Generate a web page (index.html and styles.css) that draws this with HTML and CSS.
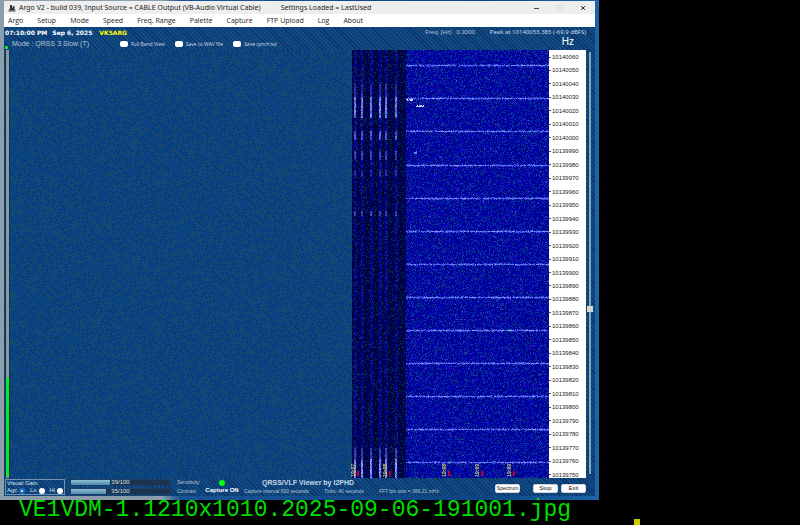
FILE: index.html
```html
<!DOCTYPE html>
<html lang="en">
<head>
    <meta charset="UTF-8">
    <meta name="viewport" content="width=device-width, initial-scale=1.0">
    <title>VE1VDM-1.1210x1010.2025-09-06-191001.jpg</title>
    <link rel="stylesheet" href="styles.css">
</head>
<body>

    <div class="desktop">
        <main class="window">

            <!-- Title bar -->
            <header class="title-bar">
                <svg class="app-icon" viewBox="0 0 16 16" aria-hidden="true">
                    <path d="M4 2h4v5h2V4h3v6l2 3H1l3-4z" fill="#333"/>
                    <path d="M1 14h14" stroke="#555" stroke-width="2"/>
                </svg>
                <h1>Argo V2 - build 039, Input Source = CABLE Output (VB-Audio Virtual Cable)</h1>
                <span class="settings">Settings Loaded = LastUsed</span>
                <div class="window-buttons">
                    <button aria-label="Minimize"><svg viewBox="0 0 6 6"><path d="M0 3.5h5" stroke="#446"/></svg></button>
                    <button aria-label="Maximize"><svg viewBox="0 0 6 6"><rect x="0.5" y="0.5" width="5" height="5" rx="1" fill="none" stroke="#c4dede"/></svg></button>
                    <button aria-label="Close"><svg viewBox="0 0 6 6"><path d="M1 1l4 4M5 1l-4 4" stroke="#333"/></svg></button>
                </div>
            </header>

            <nav class="menu-bar">
                <a href="#">Argo</a>
                <a href="#">Setup</a>
                <a href="#">Mode</a>
                <a href="#">Speed</a>
                <a href="#">Freq. Range</a>
                <a href="#">Palette</a>
                <a href="#">Capture</a>
                <a href="#">FTP Upload</a>
                <a href="#">Log</a>
                <a href="#">About</a>
            </nav>

            <div class="client">
                <div class="status-row">
                    <b>07:10:00 PM</b>
                    <b>Sep 6, 2025</b>
                    <b class="callsign">VK5ARG</b>
                    <span class="freq">Freq. [Hz]&nbsp;&nbsp; 0.3000</span>
                    <span class="peak">Peak at 10140053.385 (-69.9 dBFS)</span>
                </div>

                <div class="mode-row">
                    <i class="meter-led"></i>
                    <span class="mode">Mode : QRSS 3 Slow (T)</span>
                    <label><input type="checkbox"> Full Band View</label>
                    <label><input type="checkbox"> Save to WAV file</label>
                    <label><input type="checkbox"> Save synch'ed</label>
                    <span class="unit">Hz</span>
                </div>

                <!-- Waterfall with level meter and frequency scale -->
                <section class="viewer">
                    <div class="meter"><div class="meter-level"></div></div>
                    <div class="waterfall">
                        <canvas id="waterfall"></canvas>
                        <span class="tick tick-1">19:07</span>
                        <span class="tick tick-2">19:08</span>
                        <span class="tick tick-3">19:08</span>
                        <span class="tick tick-4">19:09</span>
                        <span class="tick tick-5">19:09</span>
                    </div>
                    <ol class="scale" id="scale"></ol>
                    <input class="tuning" type="range" min="0" max="100" value="39" aria-label="Frequency">
                </section>

                <footer class="controls">
                    <fieldset class="gain">
                        <legend>Visual Gain</legend>
                        <div class="gain-options">
                            <label>Agc <input type="radio" name="gain" checked></label>
                            <label>Lo <input type="radio" name="gain"></label>
                            <label>Hi <input type="radio" name="gain"></label>
                        </div>
                    </fieldset>

                    <div class="levels">
                        <div class="level">
                            <progress id="sensitivity" value="39" max="100"></progress>
                            <span>39/100</span>
                        </div>
                        <label for="sensitivity">Sensitivity</label>
                        <div class="level">
                            <progress id="contrast" value="35" max="100"></progress>
                            <span>35/100</span>
                        </div>
                        <label for="contrast">Contrast</label>
                    </div>

                    <div class="capture">
                        <i class="led"></i>
                        <b>Capture ON</b>
                    </div>

                    <div class="info">
                        <strong>QRSS/VLF Viewer by I2PHD</strong>
                        <div class="info-row">
                            <span>Capture interval 600 seconds</span>
                            <span>Ticks: 40 seconds</span>
                            <span>FFT bin size = 366.21 mHz</span>
                        </div>
                    </div>

                    <div class="actions">
                        <button class="spectrum">Spectrum</button>
                        <button>Stop</button>
                        <button>Exit</button>
                    </div>
                </footer>
            </div>
        </main>
    </div>

    <div class="caption">
        <p>VE1VDM-1.1210x1010.2025-09-06-191001.jpg</p>
        <i class="marker"></i>
    </div>

    <script src="waterfall.js"></script>
</body>
</html>
```

FILE: styles.css
```css
* {
    box-sizing: border-box;
}

body {
    margin: 0;
    height: 100vh;
    display: flex;
    flex-direction: column;
    background: #000;
    font-family: "Liberation Sans", Arial, sans-serif;
    font-size: 6px;
    overflow: hidden;
}

button,
input {
    margin: 0;
    padding: 0;
    font: inherit;
}

/* Desktop behind the window */
.desktop {
    flex: 1;
    width: calc(75% - 1px);
    min-height: 0;
    padding: 1px 4px 4px;
    display: flex;
    background: linear-gradient(90deg, #8c9eac 0 27%, #1a5494 30%, #0c4484 80%, #1c64a8);
}

.window {
    flex: 1;
    display: flex;
    flex-direction: column;
    min-width: 0;
}

/* Title bar */
.title-bar {
    display: flex;
    align-items: center;
    height: 13px;
    padding: 0 9px 0 4px;
    background: #eee;
    color: #222;
    font-family: "Noto Sans", "Open Sans", sans-serif;
    font-size: 7px;
    white-space: nowrap;
}

.title-bar h1 {
    margin: 0 20px 0 3px;
    font-size: 7px;
    font-weight: 400;
}

.app-icon {
    width: 8px;
    height: 8px;
}

.window-buttons {
    margin-left: auto;
    display: flex;
    gap: 17px;
}

.window-buttons button {
    display: flex;
    border: 0;
    background: none;
}

.window-buttons svg {
    width: 6px;
    height: 6px;
}

/* Menu */
.menu-bar {
    display: flex;
    align-items: center;
    gap: 14px;
    height: 13px;
    padding-left: 4px;
    background: #fff;
    font-family: "Open Sans", sans-serif;
    font-size: 7px;
    white-space: nowrap;
}

.menu-bar a {
    color: #222;
    text-decoration: none;
}

/* Client area */
.client {
    flex: 1;
    min-height: 0;
    display: flex;
    flex-direction: column;
    padding-left: 1px;
    background:
        repeating-linear-gradient(45deg, rgba(16, 24, 90, 0.5) 0 1px, transparent 1px 3px),
        #0e4c82;
    color: #b8c4d0;
    white-space: nowrap;
}

.status-row {
    display: flex;
    align-items: center;
    gap: 5px;
    height: 10px;
    padding-right: 9px;
}

.status-row b {
    color: #fff;
    font-family: "DejaVu Sans", sans-serif;
}

.status-row .callsign {
    margin-left: 2px;
    color: #ff0;
}

.status-row .freq {
    margin-left: auto;
    margin-right: 10px;
}

.peak {
    color: #d0d8e0;
    font-family: "Noto Sans", "Open Sans", sans-serif;
}

.mode-row {
    display: flex;
    align-items: center;
    height: 13px;
}

.meter-led {
    align-self: flex-end;
    width: 3px;
    height: 3px;
    margin: 0 4px 1px 0;
    background: #0e2;
}

.mode {
    width: 108px;
    font-size: 7px;
}

.mode-row label {
    display: flex;
    align-items: center;
    gap: 3px;
    margin-right: 10px;
    color: #d4dce4;
    font-family: "Open Sans", sans-serif;
    font-size: 5px;
}

.mode-row input {
    appearance: none;
    width: 8px;
    height: 6px;
    border-radius: 2px;
    background: #fff;
}

.unit {
    margin-left: auto;
    padding-right: 21px;
    color: #fff;
    font-size: 10px;
    line-height: 10px;
    align-self: flex-start;
}

/* Waterfall */
.viewer {
    flex: 1;
    min-height: 0;
    display: flex;
}

.meter {
    width: 5px;
    display: flex;
    flex-direction: column;
    justify-content: flex-end;
    padding-bottom: 2px;
    border: solid #12324c;
    border-width: 0 1px;
    background: #8a9aa4;
}

.meter-level {
    height: 23%;
    background: #0e2;
}

.waterfall {
    position: relative;
    flex: 1;
    min-width: 0;
}

.waterfall canvas {
    display: block;
    width: 100%;
    height: 100%;
}

.tick {
    position: absolute;
    bottom: 1px;
    writing-mode: vertical-rl;
    transform: rotate(180deg);
    color: #e0d860;
    font-size: 5px;
    font-weight: 700;
    line-height: 6px;
}

.tick-1 { left: 63%; }
.tick-2 { left: 69%; }
.tick-3 { left: 80%; }
.tick-4 { left: 86%; }
.tick-5 { left: 92%; }

.scale {
    display: flex;
    flex-direction: column;
    justify-content: space-between;
    width: 37px;
    margin: 0;
    padding: 4px 0 0;
    background: #fff;
    color: #222;
    list-style: none;
    line-height: 6px;
}

.scale li {
    display: flex;
    align-items: center;
    gap: 1px;
}

.scale li::before {
    content: "";
    width: 2px;
    height: 1px;
    background: #555;
}

.tuning {
    appearance: none;
    writing-mode: vertical-lr;
    direction: rtl;
    width: 7px;
    margin: 2px 2px 4px 0;
    background: linear-gradient(#7fa8b8, #7fa8b8) center / 2px 100% no-repeat;
}

.tuning::-webkit-slider-thumb {
    appearance: none;
    width: 6px;
    height: 6px;
    background: #d8d8d0;
}

/* Bottom controls */
.controls {
    display: flex;
    height: 18px;
}

.gain {
    width: 60px;
    min-width: 0;
    height: 16px;
    margin: 1px 5px 0 0;
    padding: 0 1px;
    border: 1px solid #6f93b0;
    color: #dde4ea;
    line-height: 7px;
}

.gain legend {
    float: left;
    width: 100%;
    padding: 0;
}

.gain-options {
    clear: both;
    display: flex;
    justify-content: space-between;
}

.gain label {
    display: flex;
    align-items: center;
    gap: 2px;
}

.gain input {
    appearance: none;
    width: 6px;
    height: 6px;
    border-radius: 50%;
    background: #fff;
}

.gain input:checked {
    border: 2px solid #1f6fc0;
}

.levels {
    display: grid;
    grid-template-columns: 101px 24px;
    grid-auto-rows: 7px;
    align-content: start;
    gap: 2px 6px;
    padding-top: 1px;
    font-size: 5px;
    line-height: 7px;
}

.level {
    display: grid;
}

.level > * {
    grid-area: 1 / 1;
}

.level span {
    color: #dde4ea;
    font-size: 6px;
    text-align: center;
}

progress {
    appearance: none;
    width: 100%;
    height: 7px;
    border: 1px solid #1c3f66;
}

progress::-webkit-progress-bar {
    background: #1c3350;
}

progress::-webkit-progress-value {
    background: linear-gradient(#8fc0d4, #4f88ac);
}

.capture {
    display: flex;
    flex-direction: column;
    align-items: center;
    gap: 1px;
    width: 34px;
    margin-left: 4px;
    padding-top: 2px;
    color: #fff;
    line-height: 7px;
}

.led {
    width: 6px;
    height: 6px;
    border-radius: 50%;
    background: #0f1;
}

.info {
    margin-left: 5px;
}

.info strong {
    display: block;
    padding-left: 18px;
    color: #c4d8e8;
    font-size: 7px;
    line-height: 10px;
}

.info-row {
    display: flex;
    gap: 15px;
    font-size: 5px;
    line-height: 7px;
}

.actions {
    display: flex;
    align-items: center;
    gap: 3px;
    margin-left: auto;
    padding: 5px 9px 2px 0;
}

.actions button {
    width: 25px;
    height: 9px;
    border: 1px solid #cdd6dd;
    border-radius: 2px;
    background: #fff;
    color: #111;
    line-height: 7px;
}

.actions .spectrum {
    margin-right: 10px;
    font-size: 5px;
}

/* File name under the capture */
.caption {
    display: flex;
    align-items: flex-end;
    justify-content: space-between;
    height: 25px;
    padding: 0 20% 0 19px;
}

.caption p {
    align-self: flex-start;
    margin: 0;
    color: #0d0;
    font-family: "Liberation Mono", "Courier New", monospace;
    font-size: 23px;
    line-height: 20px;
}

.marker {
    width: 6px;
    height: 6px;
    background: #cc0;
}
```

FILE: waterfall.js
```js
// Frequency scale
const scale = document.getElementById('scale');
for (let hz = 10140060; hz >= 10139750; hz -= 10) {
    const item = document.createElement('li');
    item.textContent = hz;
    scale.appendChild(item);
}

// Waterfall
const canvas = document.getElementById('waterfall');
const ctx = canvas.getContext('2d');

let seed = 7;
function random() {
    seed = (seed * 16807) % 2147483647;
    return seed / 2147483647;
}

function pick(colors) {
    return colors[Math.floor(random() * colors.length)];
}

function speckle(x, y, w, h, colors, density) {
    for (let py = y; py < y + h; py++) {
        for (let px = x; px < x + w; px++) {
            if (random() < density) {
                ctx.fillStyle = pick(colors);
                ctx.fillRect(px, py, 1, 1);
            }
        }
    }
}

// Ordered grain of the area that has no data yet
function grain(w, h) {
    ctx.fillStyle = '#004488';
    ctx.fillRect(0, 0, w, h);
    for (let y = 0; y < h; y++) {
        for (let x = 0; x < w; x++) {
            if ((x + y) % 2 === 0) {
                ctx.fillStyle = '#104a78';
                ctx.fillRect(x, y, 1, 1);
            } else if ((x + 3 * y) % 8 === 1) {
                ctx.fillStyle = random() < 0.6 ? '#101880' : '#50403c';
                ctx.fillRect(x, y, 1, 1);
            }
        }
    }
}

function draw() {
    const w = canvas.width = canvas.clientWidth;
    const h = canvas.height = canvas.clientHeight;
    const darkX = Math.round(w * 0.635);
    const blueX = Math.round(w * 0.735);
    const pulses = [0.03, 0.17, 0.34, 0.5, 0.61, 0.79];
    const bursts = [[0.08, 0.04, 0.3], [0.11, 0.05, 0.95], [0.19, 0.02, 0.7], [0.235, 0.02, 0.45],
        [0.28, 0.015, 0.3], [0.377, 0.012, 0.45], [0.93, 0.03, 0.45], [0.955, 0.045, 1]];

    grain(darkX, h);

    // Pulses
    ctx.fillStyle = '#000048';
    ctx.fillRect(darkX, 0, blueX - darkX, h);
    speckle(darkX, 0, blueX - darkX, h, ['#00006c', '#003048', '#00002c'], 0.5);
    for (const p of pulses) {
        const x = darkX + Math.round(p * (blueX - darkX));
        speckle(x, 0, 3, h, ['#0000a0', '#10209c', '#000078'], 0.7);
        for (const [top, size, power] of bursts) {
            ctx.globalAlpha = power;
            speckle(x, Math.round(top * h), 2, Math.round(size * h), ['#6c7ce8', '#98a8f4', '#4858d8'], 1);
            ctx.globalAlpha = 1;
        }
    }

    // Received signal
    ctx.fillStyle = '#00009c';
    ctx.fillRect(blueX, 0, w - blueX, h);
    speckle(blueX, 0, w - blueX, h, ['#0000c4', '#000078', '#0028a0', '#2018b4', '#004080'], 0.5);
    speckle(blueX, 0, w - blueX, h, ['#4848d8', '#5020a0'], 0.02);
    for (let i = 0; i < 13; i++) {
        const y = Math.round(h * (0.036 + i * 0.0772));
        speckle(blueX, y - 1, w - blueX, 3, ['#3040d8', '#4858e0'], 0.4);
        speckle(blueX, y, w - blueX, 1, ['#5060e8', '#6474f0', '#4058e0', '#8ca0f8'], 0.9);
    }
    speckle(blueX, Math.round(h * 0.115), 7, 2, ['#e0f0ff', '#90b8ff'], 0.9);
    speckle(blueX + 10, Math.round(h * 0.128), 8, 2, ['#e0f0ff', '#90b8ff'], 0.8);
    speckle(blueX + 8, Math.round(h * 0.235), 3, 3, ['#5090f0'], 0.7);

    // Time ticks
    ctx.fillStyle = '#c00030';
    for (const t of [0.643, 0.703, 0.813, 0.873, 0.933]) {
        ctx.fillRect(Math.round(w * t), h - 7, 2, 5);
    }
}

draw();
window.addEventListener('resize', draw);
```
